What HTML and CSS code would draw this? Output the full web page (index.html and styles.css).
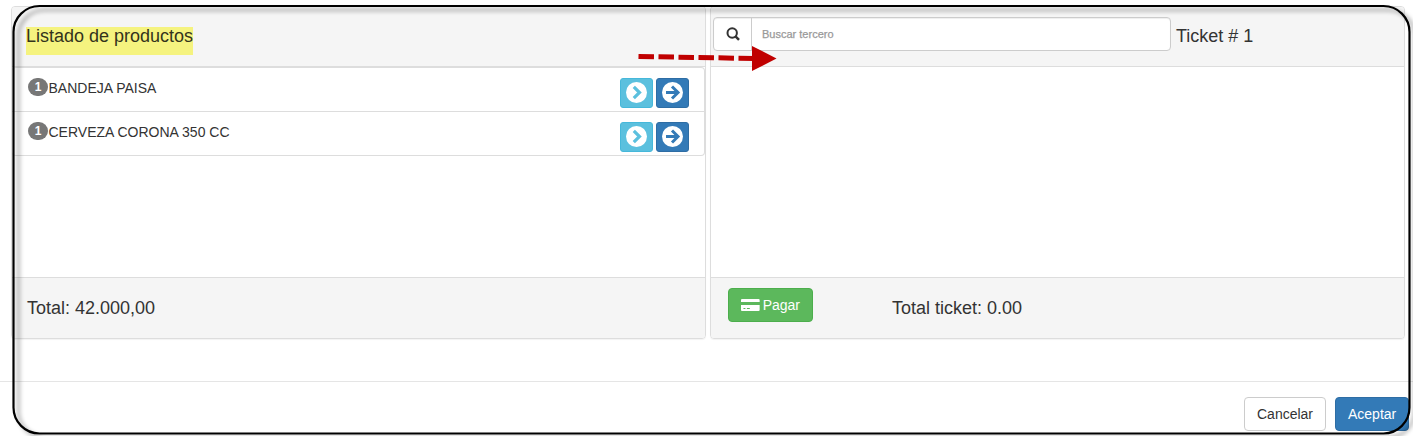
FILE: index.html
```html
<!DOCTYPE html>
<html lang="es">
<head>
<meta charset="utf-8">
<title>Dividir ticket</title>
<link rel="stylesheet" href="styles.css">
</head>
<body>
<svg class="defs" width="0" height="0">
  <symbol id="chevron" viewBox="0 0 22 22"><circle cx="10.500" cy="10.500" r="10.5" fill="#fff"/><path d="M7.800 4.800 13.500 10.500 7.800 16.200" fill="none" stroke="currentColor" stroke-width="3.200"/></symbol>
  <symbol id="arrow" viewBox="0 0 22 22"><circle cx="10.500" cy="10.500" r="10.5" fill="#fff"/><path d="M4 10.500H15.500M10 4.500l6 6-6 6" fill="none" stroke="currentColor" stroke-width="3"/></symbol>
</svg>
<main class="panels">
  <section class="panel">
    <header class="panel-head"><h4 class="title"><span class="mark">Listado de productos</span></h4></header>
    <div class="panel-body">
      <ul class="list">
        <li class="item">
          <span class="badge">1</span><span class="name">BANDEJA PAISA</span>
          <button class="move info"><svg><use href="#chevron"/></svg></button>
          <button class="move primary"><svg><use href="#arrow"/></svg></button>
        </li>
        <li class="item">
          <span class="badge">1</span><span class="name">CERVEZA CORONA 350 CC</span>
          <button class="move info"><svg><use href="#chevron"/></svg></button>
          <button class="move primary"><svg><use href="#arrow"/></svg></button>
        </li>
      </ul>
    </div>
    <footer class="panel-foot"><h4 class="total">Total: 42.000,00</h4></footer>
  </section>
  <section class="panel">
    <header class="panel-head ticket-head">
      <div class="search">
        <span class="addon"><svg width="14" height="14" viewBox="0 0 14 14"><circle cx="6.200" cy="6" r="4.700" fill="none" stroke="#333" stroke-width="2"/><path d="M9.5 9.300 13 12.800" stroke="#333" stroke-width="2.4"/></svg></span>
        <input class="field" type="text" placeholder="Buscar tercero">
      </div>
      <h4 class="title">Ticket # 1</h4>
    </header>
    <div class="panel-body"></div>
    <footer class="panel-foot pay-foot">
      <button class="btn success"><svg width="19" height="13" viewBox="0 0 19 13"><path fill="#fff" fill-rule="evenodd" d="M1 0H18Q19 0 19 1V3H0V1Q0 0 1 0ZM0 6H19V11Q19 12 18 12H1Q0 12 0 11ZM2.5 9V10H4.500V9ZM6 9V10H9V9Z"/></svg>Pagar</button>
      <h4 class="total">Total ticket: 0.00</h4>
    </footer>
  </section>
</main>
<footer class="actions">
  <button class="btn default">Cancelar</button>
  <button class="btn primary">Aceptar</button>
</footer>
<svg class="annotation" width="1413" height="436" viewBox="0 0 1413 436">
  <rect class="frame" x="13.500" y="6" width="1396" height="427.500" rx="26"/>
  <path class="dash" d="M638.500 56.500 755 58.500"/>
  <path class="tip" d="M752 46 776.500 58.500 752 71Z"/>
</svg>
</body>
</html>
```
FILE: styles.css
```css
* { box-sizing: border-box; }
body {
  margin: 0;
  width: 1413px;
  height: 436px;
  overflow: hidden;
  position: relative;
  background: #fff;
  color: #333;
  font: 14px/20px "Liberation Sans", Arial, sans-serif;
}
.defs { position: absolute; }
h4 { margin: 0; font-size: 18px; font-weight: 400; line-height: 20px; }
button { font: inherit; cursor: pointer; }
.btn { height: 34px; padding: 0 12px; border: 1px solid; border-radius: 4px; font-size: 14px; line-height: 20px; white-space: nowrap; }
.panels { display: grid; grid-template-columns: 695px 695px; gap: 4px; padding: 6px 0 0 11px; }
.panel {
  display: flex;
  flex-direction: column;
  height: 333px;
  border: 1px solid #ddd;
  border-radius: 4px;
  box-shadow: 0 1px 1px rgba(0, 0, 0, .05);
}
.panel-head { height: 60px; padding: 19px 14px 0; background: #f5f5f5; border-bottom: 1px solid #ddd; border-radius: 3px 3px 0 0; }
.mark { display: inline-block; height: 28px; background: #f5f37f; color: #33331c; line-height: 18px; }
.panel-body { flex: 1; }
.list { list-style: none; margin: 0; padding: 0; border: 1px solid #ddd; border-left: 0; border-radius: 4px; }
.item { display: flex; align-items: flex-start; height: 43px; padding: 10px 15px 0 16px; }
.item + .item { height: 44px; border-top: 1px solid #ddd; }
.badge { width: 20px; height: 18px; border-radius: 10px; background: #777; color: #fff; font-size: 12px; font-weight: 700; line-height: 18px; text-align: center; }
.name { flex: 1; padding-left: .5px; }
.move { display: grid; place-items: center; width: 33px; height: 30px; margin-left: 3px; padding: 0; border: 1px solid; border-radius: 3px; }
.move svg { width: 22px; height: 22px; }
.move.info { background: #5bc0de; border-color: #46b8da; }
.move.info svg { color: #5bc0de; }
.move.primary svg { color: #337ab7; }
.primary { background: #337ab7; border-color: #2e6da4; color: #fff; }
.panel-foot { height: 61px; padding: 20px 15px 0; background: #f5f5f5; border-top: 1px solid #ddd; border-radius: 0 0 3px 3px; }
.ticket-head { display: flex; gap: 5px; padding: 10px 2px 0; }
.ticket-head .title { padding-top: 9px; }
.search { display: flex; width: 458px; height: 34px; border: 1px solid #ccc; border-radius: 4px; background: #fff; box-shadow: inset 0 1px 1px rgba(0, 0, 0, .07); }
.addon { display: grid; place-items: center; width: 38px; border-right: 1px solid #ccc; }
.field { flex: 1; min-width: 0; border: 0; padding: 0 10px; background: transparent; font: 11px "Liberation Sans", Arial, sans-serif; outline: 0; }
.field::placeholder { color: #999; opacity: 1; -webkit-text-stroke: .25px #999; }
.success { display: flex; align-items: center; gap: 3px; width: 85px; background: #5cb85c; border-color: #4cae4c; color: #fff; }
.pay-foot { display: flex; gap: 79px; padding: 10px 17px 0; }
.pay-foot .total { padding-top: 10px; }
.default { background: #fff; border-color: #ccc; color: #333; }
.actions { display: flex; justify-content: flex-end; gap: 9px; margin-top: 42px; padding: 15px 4px 0 0; border-top: 1px solid #e5e5e5; }
.actions .default { width: 82px; }
.actions .primary { width: 74px; }
.annotation { position: absolute; left: 0; top: 0; pointer-events: none; }
.frame { fill: none; stroke: #000; stroke-width: 2.2; filter: drop-shadow(5px 4px 2px rgba(0, 0, 0, .4)); }
.dash { fill: none; stroke: #c00000; stroke-width: 5; stroke-dasharray: 15.500 4.500; }
.tip { fill: #c00000; }
```
